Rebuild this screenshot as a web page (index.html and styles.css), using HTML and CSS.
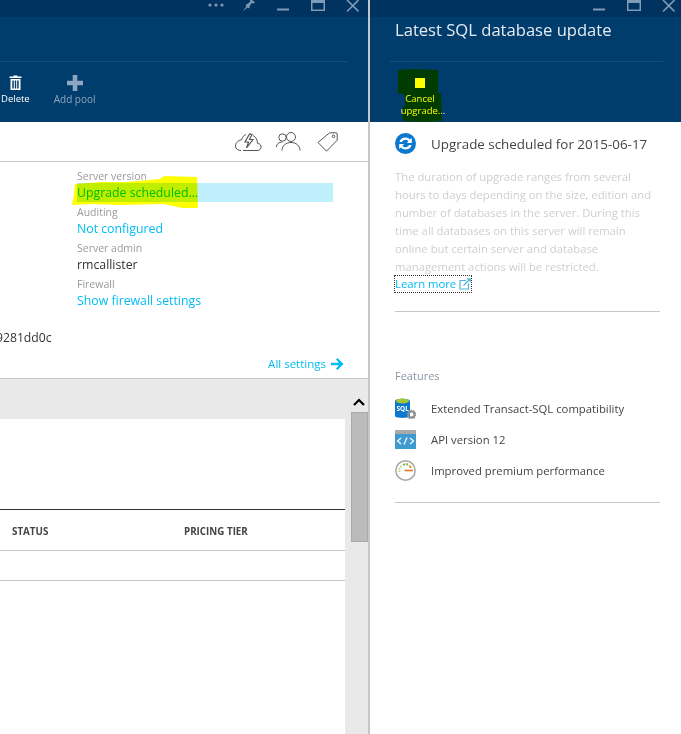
FILE: index.html
```html
<!DOCTYPE html>
<html lang="en">
<head>
    <meta charset="UTF-8">
    <meta name="viewport" content="width=device-width, initial-scale=1.0">
    <title>SQL server blade</title>
    <link rel="stylesheet" href="styles.css">
</head>
<body>
    <!-- Server blade -->
    <section class="blade blade-server">
        <header class="blade-header">
            <div class="window-bar">
                <svg class="win-icon win-dots" width="16" height="6" viewBox="0 0 16 6"><circle cx="2" cy="3" r="1.6"/><circle cx="8" cy="3" r="1.6"/><circle cx="14" cy="3" r="1.6"/></svg>
                <svg class="win-icon win-pin" width="14" height="14" viewBox="0 0 14 14"><path d="M7.5 0 L13 4.5 L11.5 5.5 L9.5 5 L7.5 8.5 L7.5 10.5 L5.5 9.5 L1 13 L4.5 8 L3.5 6.5 L5.5 6 L8.5 3.5 L7.5 1.5 Z"/></svg>
                <svg class="win-icon win-min" width="12" height="3" viewBox="0 0 12 3"><rect width="12" height="2" y="0.5"/></svg>
                <svg class="win-icon win-max" width="14" height="11" viewBox="0 0 14 11"><path d="M0 0 H14 V11 H0 Z M1.5 3 V9.5 H12.5 V3 Z" fill-rule="evenodd"/></svg>
                <svg class="win-icon win-close" width="13" height="13" viewBox="0 0 13 13"><path d="M1 0 L12.5 11.5 M12.5 0 L1 11.5" stroke-width="1.6"/></svg>
            </div>
            <div class="title-row"></div>
            <div class="commands">
                <div class="command">
                    <svg width="13" height="15" viewBox="0 0 13 15"><path d="M4.5 1 V0 H8.5 V1 H12.5 V2.5 H0.5 V1 Z M1.5 3.5 H11.5 V14.5 H1.5 Z M3.3 5 V13 H4.8 V5 Z M5.8 5 V13 H7.2 V5 Z M8.2 5 V13 H9.7 V5 Z" fill="#fff" fill-rule="evenodd"/></svg>
                    <span>Delete</span>
                </div>
                <div class="command command-off">
                    <svg width="16" height="16" viewBox="0 0 16 16"><path d="M5.7 0 H10.3 V5.7 H16 V10.3 H10.3 V16 H5.7 V10.3 H0 V5.7 H5.7 Z" fill="#8ea6bf"/></svg>
                    <span>Add pool</span>
                </div>
            </div>
        </header>

        <div class="tool-icons">
            <svg width="27" height="20" viewBox="0 0 27 20" fill="none" stroke="#555" stroke-width="1"><path d="M8 18.5 H22 C25 18.5 26.5 16.5 26 14 C25.5 12 24 11.5 22.5 11.5 C22.5 8 21 5 18 3.5 M11 2.5 C8.5 3.5 7 5.5 6.5 8 C3 8 0.5 11 0.5 14 C0.5 17 3 18.5 6 18.5"/><path d="M14.5 2 L10 10 H13.5 L11.5 16 L18 7.5 H14.5 L17 2.5 Z" stroke-width="1.2"/></svg>
            <svg class="people-icon" width="25" height="19" viewBox="0 0 25 19" fill="none" stroke="#555" stroke-width="1"><circle cx="6.5" cy="5.5" r="3.7"/><circle cx="15" cy="5" r="4.5"/><path d="M0.5 15 C0.5 12 3 10 6.5 10 M6 18.5 C6 13.5 10 10.5 15 10.5 C20 10.5 24 13.5 24 18.5"/></svg>
            <svg width="21" height="20" viewBox="0 0 21 20" fill="none" stroke="#555" stroke-width="1"><path d="M12.5 0.8 H19 C19.7 0.8 20.2 1.3 20.2 2 V8.2 L9.5 19.2 L1 10.5 Z"/><circle cx="16.5" cy="4.3" r="1.3"/></svg>
        </div>

        <div class="essentials">
            <div class="prop-list">
                <div class="prop">
                    <div class="prop-label">Server version</div>
                    <div class="prop-value prop-selected"><a class="link">Upgrade scheduled...</a></div>
                </div>
                <div class="prop">
                    <div class="prop-label">Auditing</div>
                    <div class="prop-value"><a class="link">Not configured</a></div>
                </div>
                <div class="prop">
                    <div class="prop-label">Server admin</div>
                    <div class="prop-value">rmcallister</div>
                </div>
                <div class="prop">
                    <div class="prop-label">Firewall</div>
                    <div class="prop-value"><a class="link">Show firewall settings</a></div>
                </div>
            </div>
            <div class="server-id">9281dd0c</div>
            <div class="all-settings">
                <a class="link">All settings</a>
                <svg width="13" height="12" viewBox="0 0 13 12"><path d="M0 4.7 H8 L5 1.5 L6.5 0 L12.5 6 L6.5 12 L5 10.5 L8 7.3 H0 Z" fill="#00bcf2"/></svg>
            </div>
        </div>

        <div class="lower">
            <div class="lower-main">
                <div class="lower-strip"></div>
                <div class="panel">
                    <div class="table-head">
                        <div class="col-status">STATUS</div>
                        <div class="col-tier">PRICING TIER</div>
                    </div>
                    <div class="table-row"></div>
                </div>
            </div>
            <div class="scroller">
                <svg class="scroll-up" width="12" height="8" viewBox="0 0 12 8" fill="none" stroke="#000" stroke-width="2.2"><path d="M1 7 L6 2 L11 7"/></svg>
                <div class="scroll-thumb"></div>
            </div>
        </div>

        <!-- marker scribble over the value -->
        <svg class="marker marker-value" width="126" height="33" viewBox="0 0 126 33"><path d="M3 8 L30 6 L54 6 L88 3 L92 0 L125 1 L126 32 L110 32 L92 28 L46 29 L20 28 L0 29 L2 18 Z" fill="#ffff00"/></svg>
    </section>

    <!-- Update blade -->
    <section class="blade blade-update">
        <header class="blade-header">
            <div class="window-bar">
                <svg class="win-icon win-min" width="12" height="3" viewBox="0 0 12 3"><rect width="12" height="2" y="0.5"/></svg>
                <svg class="win-icon win-max" width="14" height="11" viewBox="0 0 14 11"><path d="M0 0 H14 V11 H0 Z M1.5 3 V9.5 H12.5 V3 Z" fill-rule="evenodd"/></svg>
                <svg class="win-icon win-close" width="13" height="13" viewBox="0 0 13 13"><path d="M1 0 L12.5 11.5 M12.5 0 L1 11.5" stroke-width="1.6"/></svg>
            </div>
            <div class="title-row"><h1>Latest SQL database update</h1></div>
            <div class="commands">
                <div class="command command-cancel">
                    <span class="stop-icon"></span>
                    <span>Cancel<br><span class="cancel-second">upgrade...</span></span>
                </div>
            </div>
        </header>

        <div class="update-body">
            <div class="status-row">
                <svg width="21" height="21" viewBox="0 0 21 21"><circle cx="10.5" cy="10.5" r="10.5" fill="#0a78cf"/><path d="M4.5 9 C5 6 7.5 4.5 10.5 4.5 C12.5 4.5 14 5.3 15 6.5 L16.8 5 V10 H11.8 L13.5 8.3 C12.7 7.3 11.7 6.8 10.5 6.8 C8.8 6.8 7.5 7.7 7 9 Z M16.5 12 C16 15 13.5 16.5 10.5 16.5 C8.5 16.5 7 15.7 6 14.5 L4.2 16 V11 H9.2 L7.5 12.7 C8.3 13.7 9.3 14.2 10.5 14.2 C12.2 14.2 13.5 13.3 14 12 Z" fill="#fff"/></svg>
                <span>Upgrade scheduled for 2015-06-17</span>
            </div>
            <p class="description">The duration of upgrade ranges from several hours to days depending on the size, edition and number of databases in the server. During this time all databases on this server will remain online but certain server and database management actions will be restricted.</p>
            <a class="link learn-more">Learn more
                <svg width="12" height="12" viewBox="0 0 12 12" fill="none" stroke="#4fb3e0" stroke-width="1.2"><path d="M7 2.5 H1 V11 H9.5 V5.5 M4.5 7.5 L11 1 M8 0.8 H11.2 V4"/></svg>
            </a>
            <hr class="rule rule-first">
            <div class="features-title">Features</div>
            <ul class="features">
                <li>
                    <svg width="21" height="21" viewBox="0 0 21 21"><path d="M0 3 C0 0 15 0 15 3 V18 C15 20.5 0 20.5 0 18 Z" fill="#0a78cf"/><ellipse cx="7.5" cy="3" rx="6.5" ry="2.5" fill="#a4c639"/><text x="1.5" y="13" class="sql-mark">SQL</text><circle cx="16.5" cy="16.5" r="3" fill="none" stroke="#8a8f94" stroke-width="2"/><circle cx="16.5" cy="16.5" r="4.3" fill="none" stroke="#8a8f94" stroke-width="1.2" stroke-dasharray="1.5 1.2"/></svg>
                    <span>Extended Transact-SQL compatibility</span>
                </li>
                <li>
                    <svg width="21" height="19" viewBox="0 0 21 19"><rect width="21" height="4" fill="#a9a9a9"/><rect y="4" width="21" height="15" fill="#3f9bcf"/><path d="M6 8 L2.5 11 L6 14 M15 8 L18.5 11 L15 14 M12 7.5 L9 14.5" fill="none" stroke="#fff" stroke-width="1.2"/></svg>
                    <span>API version 12</span>
                </li>
                <li>
                    <svg width="21" height="21" viewBox="0 0 21 21"><circle cx="10.5" cy="10.5" r="9.7" fill="#fff" stroke="#a8a8a8" stroke-width="1.5"/><path d="M4.5 12 A6 6 0 0 1 7 5.5" fill="none" stroke="#b6d98a" stroke-width="2" stroke-dasharray="1.5 1"/><path d="M8 5 A6 6 0 0 1 14 5" fill="none" stroke="#7cb342" stroke-width="2" stroke-dasharray="2 1"/><path d="M14.5 5.5 L16 8" stroke="#e0a030" stroke-width="2"/><path d="M9.5 10.5 H18" stroke="#e8742a" stroke-width="1.6"/></svg>
                    <span>Improved premium performance</span>
                </li>
            </ul>
            <hr class="rule">
        </div>

        <svg class="marker marker-cancel" width="46" height="53" viewBox="0 0 46 53"><path d="M1 1 L14 0 L41 1 L41 24 L44 25 L45 52 L25 53 L6 52 L5 40 L8 36 L8 26 L1 24 Z" fill="#ffff00"/></svg>
    </section>
</body>
</html>
```

FILE: styles.css
```css
* {
    box-sizing: border-box;
}

body {
    display: flex;
    width: 681px;
    height: 734px;
    margin: 0;
    overflow: hidden;
    background-color: #ffffff;
    font-family: "Open Sans", sans-serif;
    font-size: 13px;
    color: #333333;
}

.blade {
    position: relative;
    display: flex;
    flex-direction: column;
    height: 734px;
    overflow: hidden;
}

.blade-server {
    width: 370px;
    border-right: 2px solid #c6c6c6;
}

.blade-update {
    width: 311px;
}

/* Dark header */
.blade-header {
    height: 122px;
    flex: none;
    background-color: #003c6c;
    color: #ffffff;
}

.window-bar {
    display: flex;
    justify-content: flex-end;
    align-items: flex-start;
    height: 17px;
    background-color: #003360;
}

.win-icon {
    flex: none;
    fill: #7f9ab4;
    stroke: #7f9ab4;
    stroke-width: 0;
}

.win-dots {
    margin: 2px 18px 0 0;
}

.win-pin {
    margin: -2px 21px 0 0;
    stroke: none;
}

.win-min {
    margin: 8px 22px 0 0;
}

.win-max {
    margin: 0 21px 0 0;
}

.win-close {
    margin: 0 6px 0 0;
    fill: none;
}

.blade-server .win-close {
    margin-right: 9px;
}

.title-row {
    height: 45px;
    margin-right: 20px;
    border-bottom: 1px solid #14507f;
}

.blade-update .title-row {
    margin: 0 18px 0 20px;
}

h1 {
    margin: 0;
    padding: 3px 0 0 5px;
    font-size: 16.6px;
    font-weight: 400;
    line-height: 20px;
    color: #e4ebf2;
}

.commands {
    display: flex;
    gap: 24px;
    padding-top: 13px;
}

.command {
    display: flex;
    flex-direction: column;
    align-items: center;
    gap: 2px;
    font-size: 9.5px;
    line-height: 12px;
    text-align: center;
}

.command svg {
    height: 16px;
}

.blade-server .command:first-child {
    margin-left: 1px;
}

.command-off {
    font-size: 10px;
    color: #8ea6bf;
}

.command-cancel {
    width: 48px;
    margin-left: 26px;
}

.cancel-second {
    display: inline-block;
    margin-left: 6px;
}

.stop-icon {
    width: 10px;
    height: 10px;
    margin: 3px 0 3px;
    background-color: #ffffff;
}

/* Server blade body */
.tool-icons {
    display: flex;
    justify-content: flex-end;
    align-items: center;
    gap: 14px;
    height: 40px;
    flex: none;
    padding-right: 30px;
    border-bottom: 1px solid #c6c6c6;
}

.people-icon {
    margin-right: 2px;
}

.essentials {
    height: 217px;
    flex: none;
    padding-top: 7px;
    border-bottom: 1px solid #c6c6c6;
}

.prop-list {
    margin-left: 77px;
}

.prop {
    height: 36px;
}

.prop-label {
    height: 14px;
    font-size: 10.5px;
    line-height: 14px;
    color: #9a9a9a;
}

.prop-value {
    height: 19px;
    font-size: 12.3px;
    line-height: 19px;
}

.prop-selected {
    width: 256px;
    background-color: #bfeefc;
}

.link {
    color: #00bcf2;
}

.server-id {
    margin: 16px 0 0 -4px;
    font-size: 12.2px;
    line-height: 18px;
}

.all-settings {
    display: flex;
    justify-content: flex-end;
    align-items: center;
    gap: 5px;
    margin-top: 8px;
    padding-right: 24px;
    font-size: 11.5px;
    line-height: 18px;
}

/* Lower part with the table */
.lower {
    display: flex;
    flex: 1;
    min-height: 0;
    background-color: #e9e9e9;
}

.lower-main {
    width: 345px;
}

.lower-strip {
    height: 40px;
}

.panel {
    height: 320px;
    padding-top: 90px;
    background-color: #ffffff;
}

.table-head {
    display: flex;
    align-items: center;
    height: 42px;
    padding-top: 2px;
    border-top: 1px solid #333333;
    border-bottom: 1px solid #c6c6c6;
    font-size: 9.8px;
    font-weight: 700;
    color: #444444;
}

.col-status {
    width: 184px;
    padding-left: 12px;
}

.table-row {
    height: 30px;
    border-bottom: 1px solid #c6c6c6;
}

.scroller {
    display: flex;
    flex-direction: column;
    align-items: flex-end;
    width: 23px;
}

.scroll-up {
    margin: 19px 3px 0 0;
    flex: none;
}

.scroll-thumb {
    width: 17px;
    height: 130px;
    margin-top: 6px;
    border: 1px solid #a9a9a9;
    background-color: #bbbbbb;
}

/* Update blade body */
.update-body {
    padding: 11px 21px 0 25px;
}

.status-row {
    display: flex;
    align-items: center;
    gap: 15px;
    height: 21px;
    font-size: 13.4px;
    color: #444444;
}

.description {
    margin: 14px 0 -2px;
    font-size: 11.3px;
    line-height: 18px;
    color: #cfcfcf;
}

.learn-more {
    display: inline-flex;
    align-items: center;
    gap: 3px;
    height: 16px;
    font-size: 11.3px;
    outline: 1px dotted #333333;
}

.rule {
    height: 1px;
    margin: 0;
    border: none;
    background-color: #c6c6c6;
}

.rule-first {
    margin-top: 19px;
}

.features-title {
    margin-top: 56px;
    font-size: 11px;
    line-height: 16px;
    color: #8a97a5;
}

.features {
    margin: 9px 0 16px;
    padding: 0;
    list-style: none;
}

.features li {
    display: flex;
    align-items: center;
    gap: 15px;
    height: 31px;
    font-size: 11.3px;
    color: #444444;
}

.features svg {
    flex: none;
}

.sql-mark {
    font-size: 6.5px;
    font-weight: 700;
    fill: #ffffff;
}

/* Yellow marker drawn over the screenshot */
.marker {
    position: absolute;
    mix-blend-mode: multiply;
}

.marker-value {
    left: 72px;
    top: 176px;
}

.marker-cancel {
    left: 27px;
    top: 69px;
}
```
